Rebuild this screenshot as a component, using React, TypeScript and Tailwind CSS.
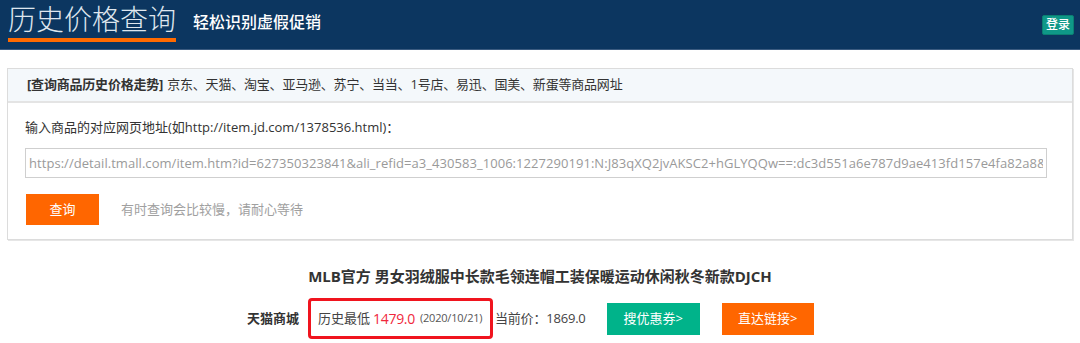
import React from "react";

const url =
  "https://detail.tmall.com/item.htm?id=627350323841&ali_refid=a3_430583_1006:1227290191:N:J83qXQ2jvAKSC2+hGLYQQw==:dc3d551a6e787d9ae413fd157e4fa82a8&spm=a230r.1.14.1";

export default function App() {
  return (
    <div className="w-[1080px] h-[343px] overflow-hidden bg-white text-[#333] font-['Open_Sans','Noto_Sans_CJK_SC',sans-serif]">
      {/* header */}
      <div className="h-[50px] bg-[#0c3660] border-b border-[#3b5b80] flex items-start">
        <div className="ml-2 w-[168px]">
          <div className="h-[38px] pt-[2px] text-[28px] leading-[34px] font-light text-[#dfe6ee] whitespace-nowrap">
            历史价格查询
          </div>
          <div className="h-[4px] bg-[#ff6a00]" />
        </div>
        <div className="ml-[17px] mt-[12px] text-[16px] leading-[20px] font-medium text-white">
          轻松识别虚假促销
        </div>
        <div className="ml-auto mr-[6px] mt-[15px] h-[20px] px-[3px] rounded-[2px] bg-[#0f9888] border border-[#0b7f72] text-[12px] leading-[18px] font-medium text-white">
          登录
        </div>
      </div>

      {/* query panel */}
      <div className="pl-[7px] pt-[18px]">
        <div className="w-[1066px] border border-[#dcdcdc] shadow-[1px_1px_0_#e6e6e6]">
          <div className="h-[34px] bg-[#f4f8fb] border-b-2 border-[#e4e4e4] flex items-center pl-[19px] text-[13px] tracking-[-0.2px] text-[#333]">
            <span className="font-bold">[查询商品历史价格走势]</span>
            <span className="ml-[4px]">
              京东、天猫、淘宝、亚马逊、苏宁、当当、1号店、易迅、国美、新蛋等商品网址
            </span>
          </div>
          <div className="pl-[17px] pt-[14px] pb-[14px]">
            <div className="text-[13px] leading-[20px] text-[#333]">
              输入商品的对应网页地址(如http://item.jd.com/1378536.html)：
            </div>
            <input
              readOnly
              value={url}
              className="mt-[11px] block w-[1022px] h-[30px] border border-[#cfcfcf] px-[3px] text-[13px] tracking-[0.05px] text-[#9a9a9a] outline-none bg-white"
            />
            <div className="mt-[16px] flex items-center">
              <button className="ml-px w-[73px] h-[31px] bg-[#ff6600] text-white text-[13px]">
                查询
              </button>
              <span className="ml-[22px] text-[13px] text-[#a0a0a0]">
                有时查询会比较慢，请耐心等待
              </span>
            </div>
          </div>
        </div>
      </div>

      {/* result */}
      <div className="mt-[25px] text-center text-[15px] leading-[22px] font-bold text-[#333]">
        MLB官方 男女羽绒服中长款毛领连帽工装保暖运动休闲秋冬新款DJCH
      </div>
      <div className="mt-[11px] pl-[247px] flex items-center text-[13px]">
        <span className="font-bold text-[#333]">天猫商城</span>
        <div className="ml-[9px] w-[185px] h-[41px] shrink-0 border-[3px] border-[#f0141e] rounded-[4px] flex items-center pl-[7px] whitespace-nowrap">
          <span className="text-[#444]">历史最低</span>
          <span className="ml-[3px] text-[14px] tracking-[-0.3px] text-[#f0283c]">1479.0</span>
          <span className="ml-[5px] text-[11px] tracking-[-0.2px] text-[#555]">(2020/10/21)</span>
        </div>
        <span className="ml-[2px] text-[#444] tracking-[-0.2px]">当前价：1869.0</span>
        <button className="ml-[21px] w-[93px] h-[32px] bg-[#00b38a] text-white text-[13px]">
          搜优惠券&gt;
        </button>
        <button className="ml-[22px] w-[92px] h-[32px] bg-[#ff6600] text-white text-[13px]">
          直达链接&gt;
        </button>
      </div>
    </div>
  );
}
